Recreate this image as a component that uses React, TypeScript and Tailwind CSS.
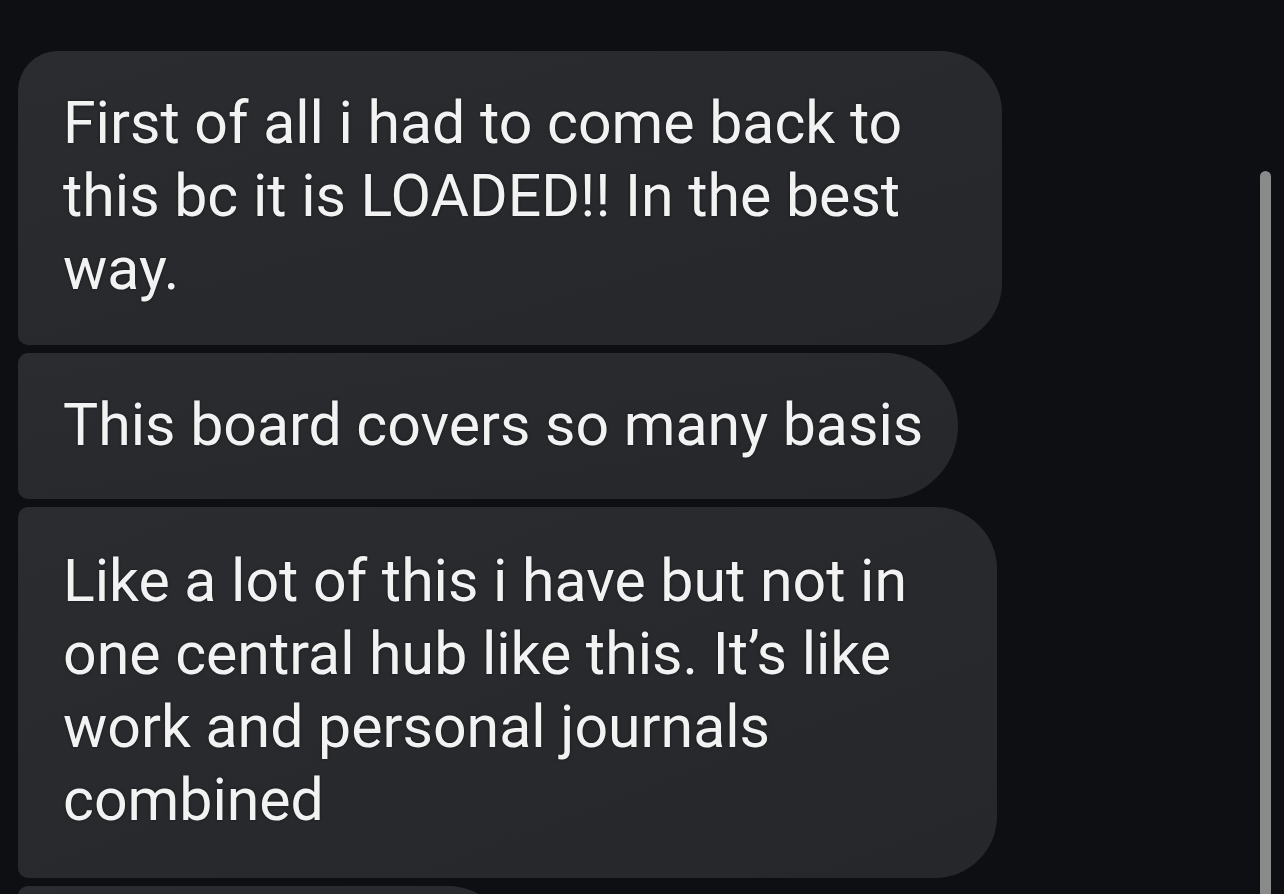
import React from "react";

type Bubble = {
  lines: string[];
  width: string;
  shape: string;
  pad: string;
};

const bubbles: Bubble[] = [
  {
    lines: ["First of all i had to come back to", "this bc it is LOADED!! In the best", "way."],
    width: "w-[984px]",
    shape: "rounded-tl-[40px] rounded-tr-[62px] rounded-br-[62px] rounded-bl-[10px]",
    pad: "pt-[35px] pb-[40px]",
  },
  {
    lines: ["This board covers so many basis"],
    width: "w-[940px]",
    shape: "rounded-tl-[10px] rounded-tr-[73px] rounded-br-[73px] rounded-bl-[10px]",
    pad: "pt-[35px] pb-[38px]",
  },
  {
    lines: [
      "Like a lot of this i have but not in",
      "one central hub like this. It\u2019s like",
      "work and personal journals",
      "combined",
    ],
    width: "w-[979px]",
    shape: "rounded-tl-[10px] rounded-tr-[62px] rounded-br-[62px] rounded-bl-[10px]",
    pad: "pt-[37px] pb-[42px]",
  },
];

export default function App() {
  return (
    <div className="relative h-[894px] w-[1284px] overflow-hidden bg-[#0d0f13]">
      <div className="flex flex-col items-start gap-[8px] pl-[18px] pt-[51px]">
        {bubbles.map((b, i) => (
          <div
            key={i}
            className={`${b.width} ${b.shape} ${b.pad} shrink-0 bg-gradient-to-br from-[#2a2c30] to-[#25272b] pl-[45px]`}
          >
            {b.lines.map((line, j) => (
              <div
                key={j}
                className="whitespace-nowrap text-[59px] leading-[73px] text-[#f2f2f2] [text-shadow:0_0_3px_rgba(0,0,0,0.5)]"
                style={{ fontFamily: "Roboto, 'Noto Sans', sans-serif" }}
              >
                {line}
              </div>
            ))}
          </div>
        ))}
        {/* next bubble, only its top edge is in view */}
        <div className="h-[120px] w-[492px] shrink-0 rounded-tl-[10px] rounded-tr-[62px] bg-gradient-to-br from-[#2a2c30] to-[#25272b]" />
      </div>

      {/* scrollbar thumb */}
      <div className="absolute left-[1260px] top-[171px] h-[760px] w-[11px] rounded-full bg-[#8a8a8a]" />
    </div>
  );
}
